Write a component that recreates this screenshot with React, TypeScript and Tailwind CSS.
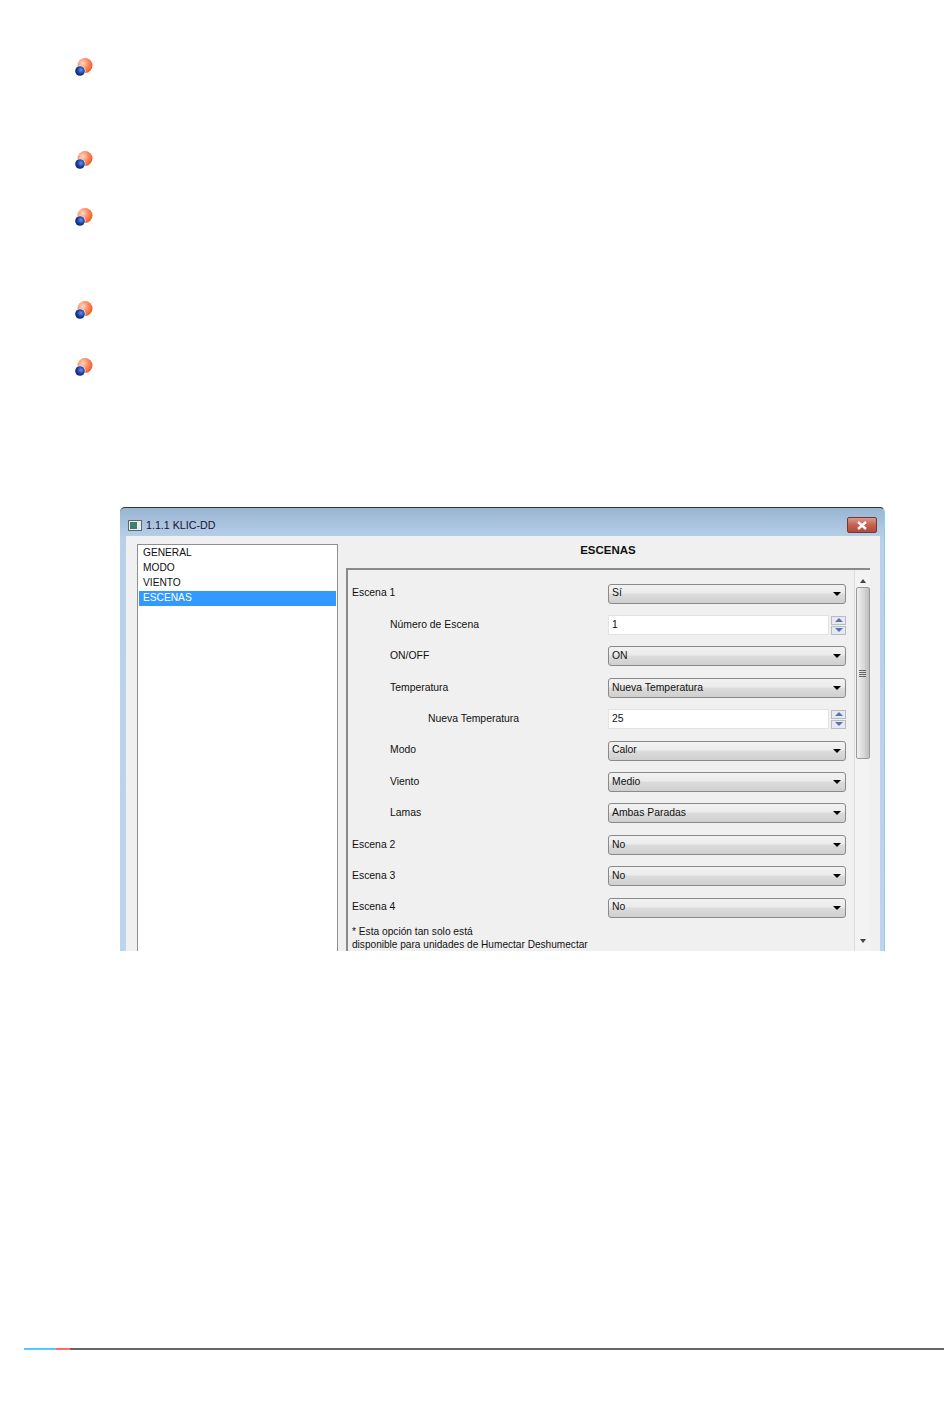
const rows = [
  { label: "Escena 1", indent: "pl-0", value: "Sí" },
  { label: "Número de Escena", indent: "pl-[38px]", value: "1", spin: true },
  { label: "ON/OFF", indent: "pl-[38px]", value: "ON" },
  { label: "Temperatura", indent: "pl-[38px]", value: "Nueva Temperatura" },
  { label: "Nueva Temperatura", indent: "pl-[76px]", value: "25", spin: true },
  { label: "Modo", indent: "pl-[38px]", value: "Calor" },
  { label: "Viento", indent: "pl-[38px]", value: "Medio" },
  { label: "Lamas", indent: "pl-[38px]", value: "Ambas Paradas" },
  { label: "Escena 2", indent: "pl-0", value: "No" },
  { label: "Escena 3", indent: "pl-0", value: "No" },
  { label: "Escena 4", indent: "pl-0", value: "No" },
];

function Bullet({ className }: { className: string }) {
  return (
    <svg width="18" height="18" viewBox="0 0 18 18" className={`block ${className}`}>
      <defs>
        <radialGradient id="orangeBall" cx="35%" cy="35%" r="70%">
          <stop offset="0%" stopColor="#ffd9c8" />
          <stop offset="55%" stopColor="#fb8a5c" />
          <stop offset="100%" stopColor="#ee5a28" />
        </radialGradient>
        <radialGradient id="blueBall" cx="60%" cy="40%" r="65%">
          <stop offset="0%" stopColor="#6c90e8" />
          <stop offset="60%" stopColor="#173f9f" />
          <stop offset="100%" stopColor="#0b2260" />
        </radialGradient>
      </defs>
      <circle cx="10" cy="7.5" r="7.5" fill="url(#orangeBall)" />
      <circle cx="5" cy="13" r="5.6" fill="#ffffff" fillOpacity="0.8" />
      <circle cx="5" cy="13" r="4.8" fill="url(#blueBall)" />
    </svg>
  );
}

function SelectBox({ value }: { value: string }) {
  return (
    <div className="flex h-[20px] w-[238px] items-center justify-between rounded-[3px] border border-[#8a8a8a] bg-[linear-gradient(#f2f2f2_0%,#ebebeb_45%,#dcdcdc_50%,#cfcfcf_100%)] pl-[3px] pr-[3px]">
      <span>{value}</span>
      <span className="mr-[1px] h-0 w-0 border-x-[4px] border-t-[4px] border-x-transparent border-t-black" />
    </div>
  );
}

function SpinBox({ value }: { value: string }) {
  return (
    <div className="flex h-[20px] w-[238px] items-center justify-between">
      <div className="flex h-[20px] w-[221px] items-center border border-[#e3e3e3] bg-white pl-[3px]">{value}</div>
      <div className="flex h-[19px] w-[15px] flex-col gap-[1px]">
        <div className="flex flex-1 items-center justify-center border border-[#b5bcc6] bg-[#e6e9ef]">
          <span className="h-0 w-0 border-x-[4px] border-b-[4px] border-x-transparent border-b-[#5870b8]" />
        </div>
        <div className="flex flex-1 items-center justify-center border border-[#b5bcc6] bg-[#e6e9ef]">
          <span className="h-0 w-0 border-x-[4px] border-t-[4px] border-x-transparent border-t-[#5870b8]" />
        </div>
      </div>
    </div>
  );
}

function Scrollbar() {
  return (
    <div className="flex w-[16px] shrink-0 flex-col items-center border-l border-[#dcdcdc] bg-[#f3f3f3] pt-[9px]">
      <span className="h-0 w-0 border-x-[3.5px] border-b-[4px] border-x-transparent border-b-[#444]" />
      <div className="mt-[4px] flex h-[172px] w-[14px] items-center justify-center rounded-[2px] border border-[#9a9a9a] bg-[linear-gradient(90deg,#f0f0f0,#d8d8d8_55%,#bdbdbd)]">
        <div className="flex flex-col gap-[1px]">
          <span className="block h-[1px] w-[7px] bg-[#666]" />
          <span className="block h-[1px] w-[7px] bg-[#666]" />
          <span className="block h-[1px] w-[7px] bg-[#666]" />
          <span className="block h-[1px] w-[7px] bg-[#666]" />
        </div>
      </div>
      <span className="mt-[180px] h-0 w-0 border-x-[3.5px] border-t-[4px] border-x-transparent border-t-[#444]" />
    </div>
  );
}

export default function App() {
  return (
    <div className="flex h-[1409px] w-[950px] flex-col overflow-hidden bg-white font-['Liberation_Sans',sans-serif] text-[10.4px] leading-none text-[#111]">
      <div className="flex flex-col pl-[75px] pt-[58px]">
        <Bullet className="" />
        <Bullet className="mt-[75px]" />
        <Bullet className="mt-[39px]" />
        <Bullet className="mt-[75px]" />
        <Bullet className="mt-[39px]" />
      </div>

      <div className="ml-[120px] mt-[131px] flex h-[444px] w-[765px] flex-col overflow-hidden rounded-t-[5px] border-r border-t border-r-[#8fcdf0] border-t-[#333] bg-[linear-gradient(#9ab5d2,#b8d1ea_7%,#bcd4ec)]">
        <div className="flex h-[28px] shrink-0 items-center justify-between pl-[8px] pr-[7px] pt-[6px]">
          <div className="flex items-center gap-[4px]">
            <div className="flex h-[11px] w-[14px] items-center border border-[#666] bg-[#e8eef0] pl-[1px]">
              <span className="block h-[7px] w-[7px] bg-[#3f8070]" />
            </div>
            <span className="text-[10.7px] text-[#1a1030]">1.1.1 KLIC-DD</span>
          </div>
          <div className="flex h-[16px] w-[30px] items-center justify-center rounded-[2px] border border-[#6d3a35] bg-[linear-gradient(#dd9a8c,#c8604f_50%,#b14a3a)]">
            <svg width="12" height="9" viewBox="0 0 12 9">
              <path d="M2 1 L10 8 M10 1 L2 8" stroke="#fff" strokeWidth="2.4" />
            </svg>
          </div>
        </div>

        <div className="ml-[6px] mr-[4px] flex min-h-0 flex-1 bg-[#f0f0f0] pl-[11px] pr-[10px] pt-[8px]">
          <div className="h-[500px] w-[201px] shrink-0 border border-[#8f8f8f] bg-white p-[1px] text-[10.2px]">
            <div className="flex h-[15px] items-center pl-[4px] pb-[1px]">GENERAL</div>
            <div className="flex h-[15px] items-center pl-[4px] pb-[1px]">MODO</div>
            <div className="flex h-[15px] items-center pl-[4px] pb-[1px]">VIENTO</div>
            <div className="flex h-[15px] items-center bg-[#3399ff] pl-[4px] text-white">ESCENAS</div>
          </div>

          <div className="ml-[8px] flex min-w-0 flex-1 flex-col">
            <div className="flex h-[24px] shrink-0 items-start justify-center pt-[1px] text-[11.5px] font-bold">ESCENAS</div>
            <div className="flex h-[500px] border-l-2 border-t-2 border-[#8a8a8a]">
              <div className="flex flex-1 flex-col pl-[4px] pr-[8px] pt-[8px]">
                {rows.map((row) => (
                  <div key={row.label} className="flex h-[31.4px] shrink-0 items-center justify-between">
                    <span className={row.indent}>{row.label}</span>
                    {row.spin ? <SpinBox value={row.value} /> : <SelectBox value={row.value} />}
                  </div>
                ))}
                <p className="mt-[2px] text-[10.2px] leading-[13px]">* Esta opción tan solo está</p>
                <p className="text-[10.1px] leading-[13px]">disponible para unidades de Humectar Deshumectar</p>
              </div>
              <Scrollbar />
            </div>
          </div>
        </div>
      </div>

      <div className="ml-[24px] mt-[397px] flex h-[2px] w-[920px]">
        <div className="w-[32px] bg-[#55c8ff]" />
        <div className="w-[14px] bg-[#ff6a6a]" />
        <div className="flex-1 bg-[#666]" />
      </div>
    </div>
  );
}
